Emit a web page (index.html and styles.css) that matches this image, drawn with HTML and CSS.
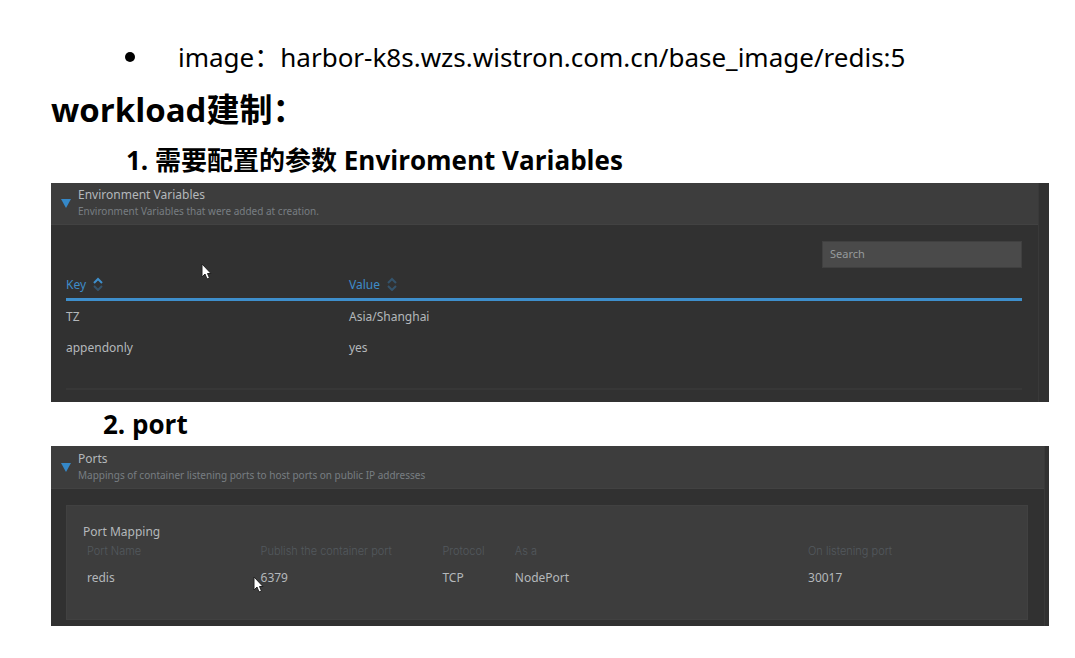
FILE: index.html
```html
<!DOCTYPE html>
<html lang="zh-CN">
<head>
<meta charset="utf-8">
<title>workload建制</title>
<link rel="stylesheet" href="styles.css">
</head>
<body>
<main class="doc">
  <ul class="facts">
    <li>image：harbor-k8s.wzs.wistron.com.cn/base_image/redis:5</li>
  </ul>
  <h1 class="title">workload建制：</h1>
  <h2 class="step step-deep">1. 需要配置的参数 Enviroment Variables</h2>
  <section class="panel panel-env">
    <div class="frame">
      <header class="panel-head">
        <svg class="caret" viewBox="0 0 10 9" aria-hidden="true"><path d="M0 0H10L5 9Z"/></svg>
        <div>
          <h3 class="panel-title">Environment Variables</h3>
          <p class="panel-note">Environment Variables that were added at creation.</p>
        </div>
      </header>
      <div class="panel-body">
        <input class="search" type="search" placeholder="Search" aria-label="Search">
        <table class="env">
          <thead>
            <tr>
              <th class="env-key"><button class="sort" type="button">Key <svg class="sort-icon" viewBox="0 0 10 14" aria-hidden="true"><path d="M1 9L5 13L9 9"/><path class="on" d="M1 6L5 2L9 6"/></svg></button></th>
              <th><button class="sort" type="button">Value <svg class="sort-icon" viewBox="0 0 10 14" aria-hidden="true"><path d="M1 6L5 2L9 6"/><path d="M1 9L5 13L9 9"/></svg></button></th>
            </tr>
          </thead>
          <tbody>
            <tr><td>TZ</td><td>Asia/Shanghai</td></tr>
            <tr><td>appendonly</td><td>yes</td></tr>
          </tbody>
        </table>
      </div>
    </div>
    <svg class="pointer pointer-env" viewBox="0 0 11 17" aria-hidden="true"><path d="M1 1V14L4 11L6 16L8.500 15L6.500 10.500H10Z"/></svg>
  </section>
  <h2 class="step">2. port</h2>
  <section class="panel panel-ports">
    <div class="frame">
      <header class="panel-head">
        <svg class="caret" viewBox="0 0 10 9" aria-hidden="true"><path d="M0 0H10L5 9Z"/></svg>
        <div>
          <h3 class="panel-title">Ports</h3>
          <p class="panel-note">Mappings of container listening ports to host ports on public IP addresses</p>
        </div>
      </header>
      <div class="panel-body">
        <div class="card">
          <h4 class="card-title">Port Mapping</h4>
          <table class="ports">
            <colgroup><col class="c-name"><col class="c-publish"><col class="c-protocol"><col class="c-as"><col></colgroup>
            <thead>
              <tr><th>Port Name</th><th>Publish the container port</th><th>Protocol</th><th>As a</th><th>On listening port</th></tr>
            </thead>
            <tbody>
              <tr><td>redis</td><td>6379</td><td>TCP</td><td>NodePort</td><td>30017</td></tr>
            </tbody>
          </table>
        </div>
      </div>
    </div>
    <svg class="pointer pointer-ports" viewBox="0 0 11 17" aria-hidden="true"><path d="M1 1V14L4 11L6 16L8.500 15L6.500 10.500H10Z"/></svg>
  </section>
</main>
</body>
</html>
```
FILE: styles.css
```css
* { box-sizing: border-box; }
body {
  margin: 0;
  background: #fff;
  color: #000;
  font-family: "Noto Sans", "Noto Sans CJK SC", sans-serif;
}
h1, h2, h3, h4, p, ul { margin: 0; padding: 0; }
.doc { padding: 33px 26px 32px 51px; }

.facts { list-style: none; font-size: 26px; line-height: 48px; }
.facts li { display: flex; align-items: center; padding-left: 74px; }
.facts li::before {
  content: "";
  width: 10px;
  height: 10px;
  margin-right: 43px;
  border-radius: 50%;
  background: #000;
}
.title { font-size: 33px; line-height: 57px; }
.step { padding-left: 52px; font-size: 26px; line-height: 44px; }
.step-deep { padding-left: 75px; line-height: 45px; }
.title, .step { font-family: "Open Sans", "Noto Sans CJK SC", sans-serif; }

.panel {
  position: relative;
  background: #313131;
  color: #b4b8bb;
  font-family: "Noto Sans", sans-serif;
  font-size: 12px;
}
.panel-env { padding-right: 10px; }
.panel-ports { padding-right: 4px; }
.frame { border-right: 1px solid #393939; }
.panel-head {
  display: flex;
  align-items: center;
  gap: 7px;
  padding: 3px 10px 4px;
  border-bottom: 1px solid #424242;
  background: #3d3d3d;
}
.panel-ports .panel-head { padding-top: 4px; }
.caret { width: 10px; height: 9px; fill: #3588c8; }
.panel-title { font-size: 12px; font-weight: 400; line-height: 17px; }
.panel-note { color: #787d82; font-size: 10px; line-height: 17px; }
.panel-body { padding: 16px 16px 12px 15px; }
.panel-ports .panel-body { padding-bottom: 6px; }

.search {
  display: block;
  width: 200px;
  height: 27px;
  margin-left: auto;
  padding: 0 7px 2px;
  border: 1px solid #404040;
  background: #4a4a4a;
  color: #b4b8bb;
  font: 11px "Noto Sans", sans-serif;
}
.search::placeholder { color: #969a9c; opacity: 1; }

table { width: 100%; border-collapse: collapse; table-layout: fixed; }
th, td { padding: 0; text-align: left; font-weight: 400; }
.env { margin-top: 3px; border-bottom: 2px solid #373737; }
.env thead th { height: 28px; border-bottom: 3px solid #3e8fcc; }
.env-key { width: 29.6%; }
.env td { height: 33px; }
.env tbody tr:last-child td { height: 57px; padding-bottom: 25px; }
.sort {
  display: flex;
  align-items: center;
  gap: 7px;
  padding: 0;
  border: 0;
  background: none;
  color: #3e8cc8;
  font: 12px "Noto Sans", sans-serif;
}
.sort-icon { width: 10px; height: 14px; fill: none; stroke: #34536b; stroke-width: 2; }
.sort-icon .on { stroke: #3e8fcc; }

.card { padding: 17px 16px 26px; border: 1px solid #414141; background: #3d3d3d; }
.card-title { font-size: 12px; font-weight: 400; line-height: 18px; }
.ports th {
  height: 20px;
  padding-left: 4px;
  color: #53595e;
  font-family: Inter, sans-serif;
  font-size: 11px;
  font-weight: 300;
}
.ports td { height: 32px; padding-left: 4px; }
.c-name { width: 18.7%; }
.c-publish { width: 19.6%; }
.c-protocol { width: 7.8%; }
.c-as { width: 31.6%; }

.pointer { position: absolute; width: 11px; height: 17px; fill: #fff; stroke: #222; stroke-width: 1; }
.pointer-env { left: 150px; top: 80px; }
.pointer-ports { left: 202px; top: 130px; }
```
